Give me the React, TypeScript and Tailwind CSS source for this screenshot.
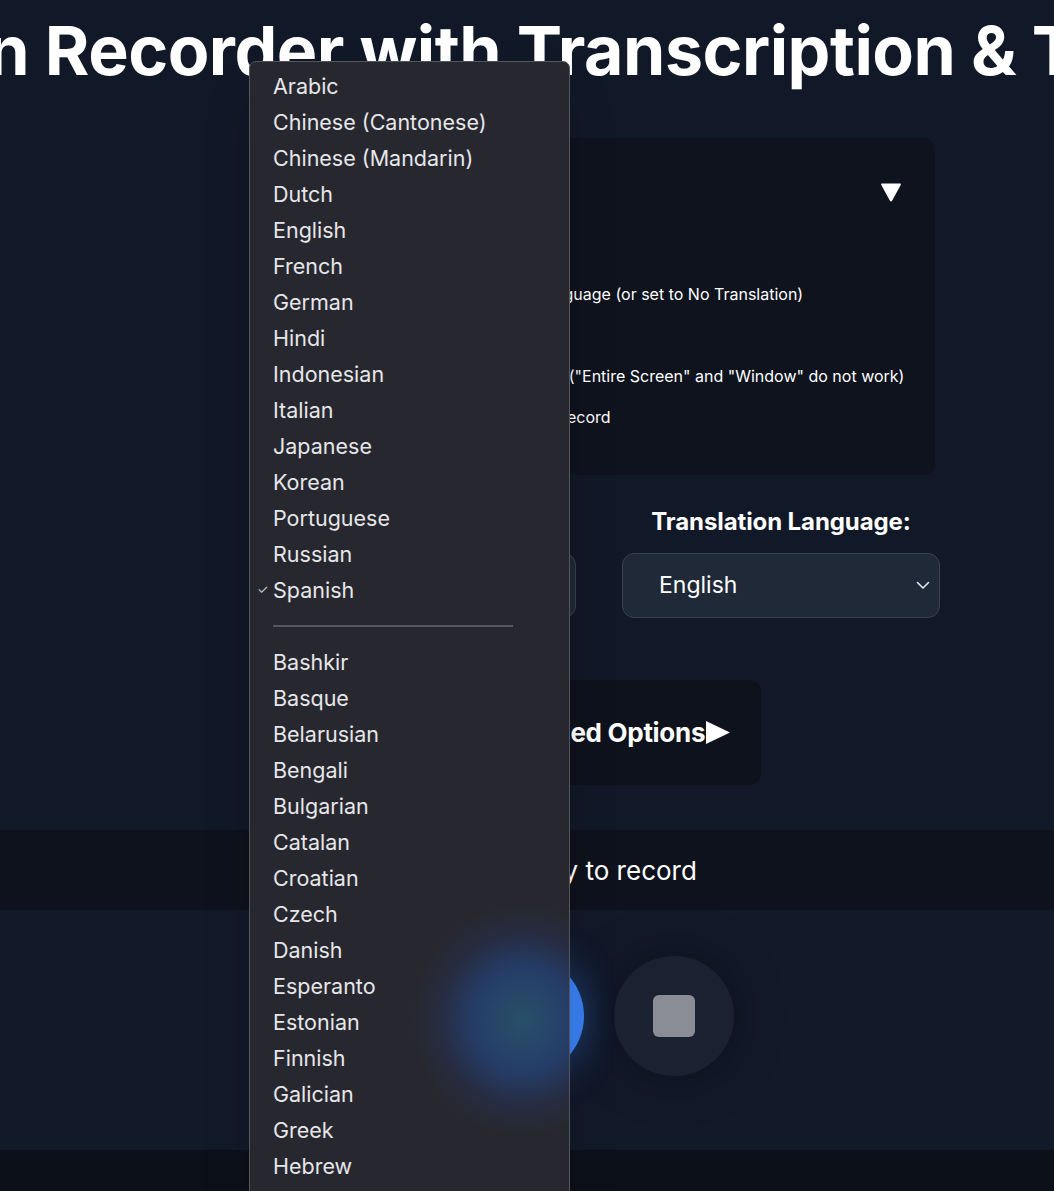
import React from 'react'

const spokenTop = [
  'Arabic',
  'Chinese (Cantonese)',
  'Chinese (Mandarin)',
  'Dutch',
  'English',
  'French',
  'German',
  'Hindi',
  'Indonesian',
  'Italian',
  'Japanese',
  'Korean',
  'Portuguese',
  'Russian',
  'Spanish',
]

const spokenMore = [
  'Bashkir',
  'Basque',
  'Belarusian',
  'Bengali',
  'Bulgarian',
  'Catalan',
  'Croatian',
  'Czech',
  'Danish',
  'Esperanto',
  'Estonian',
  'Finnish',
  'Galician',
  'Greek',
  'Hebrew',
  'Hungarian',
  'Icelandic',
]

const steps = [
  '1. Pick a spoken language',
  '2. So select the translation target language (or set to No Translation)',
  '3. Click record to begin',
  '4. Share a Chrome Tab with its audio ("Entire Screen" and "Window" do not work)',
  '5. Press the stop button to end your record',
]

function Chevron() {
  return (
    <svg width="14" height="9" viewBox="0 0 14 9" fill="none" className="shrink-0">
      <polyline points="1.5,1.5 7,7 12.5,1.5" stroke="#e5e7eb" strokeWidth="1.6" strokeLinecap="round" strokeLinejoin="round" />
    </svg>
  )
}

function FakeSelect({ label, value }: { label: string; value: string }) {
  return (
    <div className="flex w-[318px] flex-col items-center">
      <span className="mb-[15px] text-[24px] font-bold leading-[32px] tracking-[-0.1px] text-white">{label}</span>
      <div className="flex h-[65px] w-full items-center justify-between rounded-xl border border-[#374151] bg-[#1f2937] pl-[36px] pr-[9px]">
        <span className="text-[23px] text-white">{value}</span>
        <Chevron />
      </div>
    </div>
  )
}

function LanguageMenu() {
  return (
    <div
      className="absolute left-[249px] top-[61px] h-[1160px] w-[321px] overflow-hidden rounded-t-[7px] border border-[#55565d] bg-[#27282f] pt-[6px] shadow-2xl"
      style={{ fontFamily: 'Inter, "Liberation Sans", sans-serif' }}
    >
      {/* glow of the record button showing through the menu */}
      <div className="pointer-events-none absolute left-[163px] top-[843px] h-[230px] w-[220px] rounded-full bg-[radial-gradient(closest-side,rgba(40,82,108,0.95)_0%,rgba(37,66,118,0.8)_45%,rgba(36,52,100,0.35)_75%,transparent_100%)]" />
      <div className="relative">
        {spokenTop.map(lang => (
          <div key={lang} className="relative flex h-[36px] items-center pl-[23px] text-[21.5px] text-[#e6e6e9]">
            {lang === 'Spanish' && (
              <span className="absolute left-[7px] text-[13px] text-[#c9c9ce]">✓</span>
            )}
            {lang}
          </div>
        ))}
        <div className="flex h-[36px] items-center pl-[23px]">
          <div className="h-[2px] w-[240px] bg-[#56575e]" />
        </div>
        {spokenMore.map(lang => (
          <div key={lang} className="flex h-[36px] items-center pl-[23px] text-[21.5px] text-[#e6e6e9]">
            {lang}
          </div>
        ))}
      </div>
    </div>
  )
}

export default function App() {
  return (
    <div
      className="relative h-[1191px] w-full overflow-hidden bg-[#111827]"
      style={{ fontFamily: 'Inter, "Liberation Sans", sans-serif' }}
    >
      <div className="w-[1198px]">
        {/* Title */}
        <div className="flex justify-center pt-[10px]">
          <h1 className="shrink-0 whitespace-nowrap text-[68px] font-bold leading-[80px] tracking-[-0.5px] text-white">
            Screen Recorder with Transcription &amp; Translation
          </h1>
        </div>

        {/* Instructions */}
        <div className="mx-auto mt-[48px] h-[337px] max-w-2xl rounded-xl bg-[#0e131e] px-6 pt-6">
          <div className="flex h-[60px] items-center justify-between pr-[9px]">
            <h2 className="text-[24px] font-bold text-white">How to Use</h2>
            <svg width="22" height="22" viewBox="0 0 22 22">
              <path d="M2 2.5 H20 Q21.5 2.5 20.7 3.9 L12.2 19.6 Q11 21.5 9.8 19.6 L1.3 3.9 Q0.5 2.5 2 2.5 Z" fill="white" />
            </svg>
          </div>
          <ul className="mt-[10px]">
            {steps.map(step => (
              <li key={step} className="flex h-[41px] items-center whitespace-nowrap text-[16px] text-white">
                {step}
              </li>
            ))}
          </ul>
        </div>

        {/* Language selectors */}
        <div className="mt-[31px] flex justify-center gap-[46px]">
          <FakeSelect label="Spoken Language:" value="Spanish" />
          <FakeSelect label="Translation Language:" value="English" />
        </div>

        {/* Advanced options */}
        <div className="mx-auto mt-[62px] flex h-[105px] w-[324px] items-center justify-center rounded-xl bg-[#0e121c] pl-[8px]">
          <span className="text-[26px] font-bold tracking-[-0.3px] text-white">Advanced Options</span>
          <svg width="26" height="25" viewBox="0 0 26 25">
            <path d="M1 1 L25 12.5 L1 24 Z" fill="white" />
          </svg>
        </div>

        {/* Status */}
        <div className="mt-[45px] flex h-[80px] items-center justify-center bg-[#0e121c]">
          <span className="text-[26px] text-white">Ready to record</span>
        </div>

        {/* Controls */}
        <div className="flex h-[240px] justify-center gap-[30px] bg-[#121929] pt-[46px]">
          <button className="h-[120px] w-[120px] rounded-full bg-[#3b82f6] shadow-[0_0_40px_rgba(59,130,246,0.45)]" />
          <button className="flex h-[120px] w-[120px] items-center justify-center rounded-full bg-[#1a2130] shadow-[0_0_50px_rgba(0,0,0,0.35)]">
            <span className="h-[42px] w-[42px] rounded-[6px] bg-[#8a8d96]" />
          </button>
        </div>

        <div className="h-[60px] bg-[#0c1019]" />
      </div>

      <LanguageMenu />
    </div>
  )
}
